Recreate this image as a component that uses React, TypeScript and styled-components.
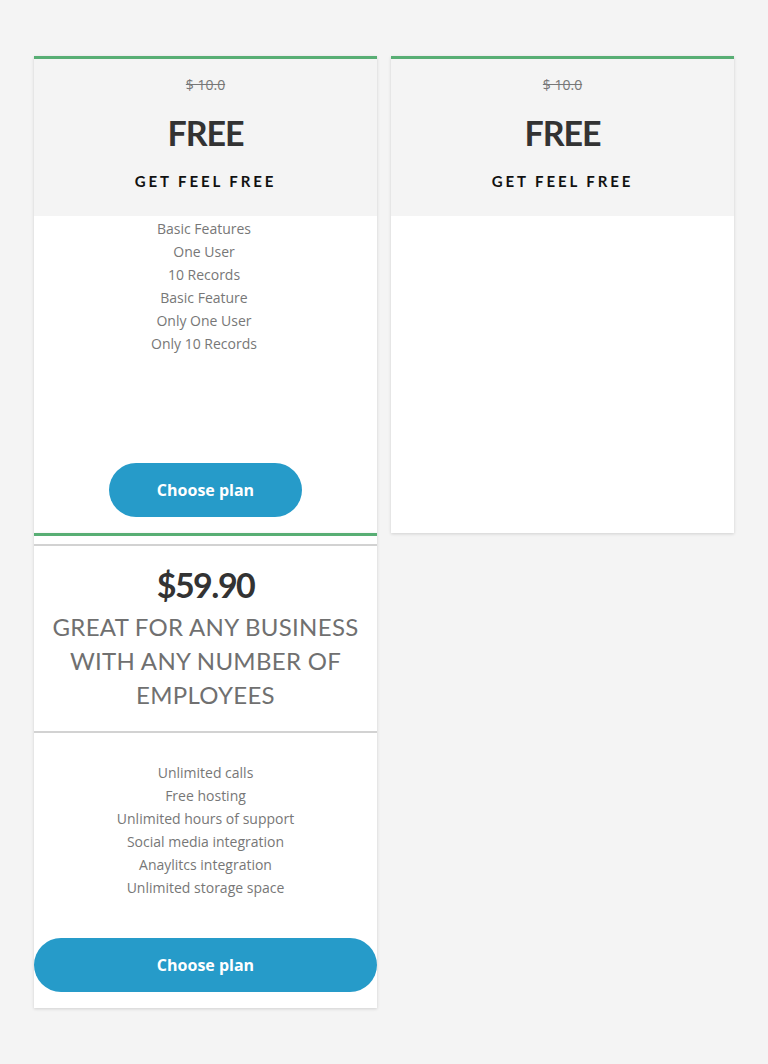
import React from "react";
import styled, { createGlobalStyle } from "styled-components";

const Global = createGlobalStyle`
  html, body { margin: 0; padding: 0; background: #f4f4f4; }
  body { font-family: "Open Sans", "Liberation Sans", sans-serif; }
`;

const Page = styled.div`
  padding: 56px 34px 40px 34px;
  display: grid;
  grid-template-columns: 343px 343px;
  column-gap: 14px;
  align-items: stretch;
`;

const Card = styled.div`
  background: #fff;
  border-top: 3px solid #58ae74;
  box-shadow: 0 1px 3px rgba(0, 0, 0, 0.15);
  display: flex;
  flex-direction: column;
`;

const Header = styled.div`
  background: #f4f4f4;
  height: 157px;
  display: flex;
  flex-direction: column;
  align-items: center;
  text-align: center;
`;

const OldPrice = styled.div`
  margin-top: 16px;
  font-family: "Open Sans", sans-serif;
  font-size: 14px;
  line-height: 20px;
  color: #777;
  text-decoration: line-through;
`;

const Free = styled.div`
  margin-top: 18px;
  font-family: "Lato", "Inter", sans-serif;
  font-weight: 700;
  font-size: 34px;
  line-height: 40px;
  color: #333;
  letter-spacing: -1px;
`;

const Tagline = styled.div`
  margin-top: 18px;
  font-family: "Lato", sans-serif;
  font-weight: 700;
  font-size: 15px;
  line-height: 20px;
  letter-spacing: 2.9px;
  color: #111;
`;

const Features = styled.ul<{ $shift?: boolean }>`
  list-style: none;
  margin: 0;
  padding: ${(p) => (p.$shift ? "1px 3px 0 0" : "0")};
  text-align: center;
  font-family: "Open Sans", sans-serif;
  font-size: 14px;
  line-height: 23px;
  color: #777;
`;

const Body = styled.div`
  flex: 1;
  display: flex;
  flex-direction: column;
  align-items: center;
  padding-bottom: 16px;
`;

const Button = styled.button<{ $full?: boolean }>`
  width: ${(p) => (p.$full ? "100%" : "193px")};
  height: 54px;
  border: none;
  border-radius: 27px;
  background: #269bc9;
  color: #fff;
  font-family: "Open Sans", sans-serif;
  font-weight: 700;
  font-size: 16px;
  margin-top: auto;
  cursor: pointer;
`;

const Spacer = styled.div<{ $h: number }>`
  height: ${(p) => p.$h}px;
  flex-shrink: 0;
`;

const Divider = styled.div`
  height: 2px;
  background: #d2d2d2;
  align-self: stretch;
`;

const PremiumTop = styled.div`
  padding-top: 8px;
  display: flex;
  flex-direction: column;
  align-items: center;
  text-align: center;
`;

const BigPrice = styled.div`
  margin-top: 19px;
  font-family: "Lato", sans-serif;
  font-weight: 700;
  font-size: 34px;
  line-height: 40px;
  letter-spacing: -1.5px;
  color: #333;
`;

const Desc = styled.div`
  margin-top: 5px;
  padding: 0 10px 19px;
  font-family: "Lato", sans-serif;
  font-weight: 400;
  font-size: 24px;
  line-height: 34px;
  letter-spacing: 0.3px;
  color: #707070;
  text-transform: uppercase;
`;

const PremiumBody = styled.div`
  padding-top: 28px;
  padding-bottom: 16px;
  display: flex;
  flex-direction: column;
  align-items: center;
`;

const basic = [
  "Basic Features",
  "One User",
  "10 Records",
  "Basic Feature",
  "Only One User",
  "Only 10 Records",
];

const premium = [
  "Unlimited calls",
  "Free hosting",
  "Unlimited hours of support",
  "Social media integration",
  "Anaylitcs integration",
  "Unlimited storage space",
];

function FreeHeader() {
  return (
    <Header>
      <OldPrice>$ 10.0</OldPrice>
      <Free>FREE</Free>
      <Tagline>GET FEEL FREE</Tagline>
    </Header>
  );
}

export default function App() {
  return (
    <>
      <Global />
      <Page>
        <Card>
          <FreeHeader />
          <Body>
            <Features $shift>
              {basic.map((f) => (
                <li key={f}>{f}</li>
              ))}
            </Features>
            <Spacer $h={108} />
            <Button>Choose plan</Button>
          </Body>
        </Card>
        <Card>
          <FreeHeader />
        </Card>
        <Card>
          <PremiumTop>
            <Divider />
            <BigPrice>$59.90</BigPrice>
            <Desc>Great for any business with any number of employees</Desc>
            <Divider />
          </PremiumTop>
          <PremiumBody>
            <Features>
              {premium.map((f) => (
                <li key={f}>{f}</li>
              ))}
            </Features>
            <Spacer $h={39} />
            <Button $full>Choose plan</Button>
          </PremiumBody>
        </Card>
      </Page>
    </>
  );
}
